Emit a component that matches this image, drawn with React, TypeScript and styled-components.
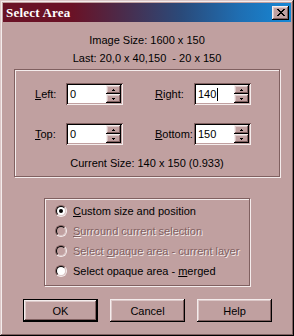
import React from 'react';
import styled, { createGlobalStyle, css } from 'styled-components';

const FACE = '#c0a0a0';
const LIGHT = '#dcc8c8';
const HILITE = '#f4ecec';
const SHADOW = '#806060';
const DARK = '#000000';

const GlobalStyle = createGlobalStyle`
  html, body {
    margin: 0;
    padding: 0;
    background: ${FACE};
  }
`;

const raised = css`
  background: ${FACE};
  box-shadow:
    inset -1px -1px 0 ${DARK},
    inset 1px 1px 0 ${HILITE},
    inset -2px -2px 0 ${SHADOW},
    inset 2px 2px 0 ${LIGHT};
`;

export default function App() {
  return (
    <>
      <GlobalStyle />
      <Window>
        <TitleBar>
          <Title>Select Area</Title>
          <CloseButton>
            <svg width="8" height="7" viewBox="0 0 8 7" shapeRendering="crispEdges">
              <path
                d="M0 0h2v1h1v1h2V1h1V0h2v1H7v1H6v1H5v1h1v1h1v1h1v1H6V6H5V5H3v1H2v1H0V6h1V5h1V4h1V3H2V2H1V1H0z"
                fill="#000"
              />
            </svg>
          </CloseButton>
        </TitleBar>

        <Body>
          <InfoLine>Image Size: 1600 x 150</InfoLine>
          <InfoLine>Last: 20,0 x 40,150  - 20 x 150</InfoLine>

          <SizeGroup>
            <FieldGrid>
              <FieldLabel><U>L</U>eft:</FieldLabel>
              <Spinner value="0" />
              <FieldLabel><U>R</U>ight:</FieldLabel>
              <Spinner value="140" caret />
              <FieldLabel><U>T</U>op:</FieldLabel>
              <Spinner value="0" />
              <FieldLabel><U>B</U>ottom:</FieldLabel>
              <Spinner value="150" />
            </FieldGrid>
            <CurrentSize>Current Size: 140 x 150 (0.933)</CurrentSize>
          </SizeGroup>

          <ModeGroup>
            <RadioRow>
              <Radio checked />
              <RadioText><U>C</U>ustom size and position</RadioText>
            </RadioRow>
            <RadioRow>
              <Radio disabled />
              <RadioText $disabled><U>S</U>urround current selection</RadioText>
            </RadioRow>
            <RadioRow>
              <Radio disabled />
              <RadioText $disabled>Select <U>o</U>paque area - current layer</RadioText>
            </RadioRow>
            <RadioRow>
              <Radio />
              <RadioText>Select opaque area - <U>m</U>erged</RadioText>
            </RadioRow>
          </ModeGroup>

          <ButtonRow>
            <DialogButton $default>OK</DialogButton>
            <DialogButton>Cancel</DialogButton>
            <DialogButton>Help</DialogButton>
          </ButtonRow>
        </Body>
      </Window>
    </>
  );
}

function Spinner({ value, caret }: { value: string; caret?: boolean }) {
  return (
    <SpinBox>
      <SpinText>
        {value}
        {caret && <Caret />}
      </SpinText>
      <SpinButtons>
        <SpinButton>
          <svg width="3" height="2" viewBox="0 0 3 2" shapeRendering="crispEdges">
            <path d="M1 0h1v1h1v1H0V1h1z" fill="#000" />
          </svg>
        </SpinButton>
        <SpinButton>
          <svg width="3" height="2" viewBox="0 0 3 2" shapeRendering="crispEdges">
            <path d="M0 0h3v1H2v1H1V1H0z" fill="#000" />
          </svg>
        </SpinButton>
      </SpinButtons>
    </SpinBox>
  );
}

function Radio({ checked, disabled }: { checked?: boolean; disabled?: boolean }) {
  return (
    <RadioOuter>
      <RadioInner $disabled={disabled}>{checked && <RadioDot />}</RadioInner>
    </RadioOuter>
  );
}

/* --- Styled Components --- */

const Window = styled.div`
  width: 294px;
  height: 336px;
  box-sizing: border-box;
  padding: 3px;
  display: flex;
  flex-direction: column;
  background: ${FACE};
  box-shadow:
    inset -1px -1px 0 ${DARK},
    inset 1px 1px 0 ${LIGHT},
    inset -2px -2px 0 ${SHADOW},
    inset 2px 2px 0 ${HILITE};
  font-family: 'Liberation Sans', Arial, sans-serif;
  font-size: 11px;
  color: #000;
`;

const TitleBar = styled.div`
  height: 19px;
  display: flex;
  align-items: center;
  padding: 0 2px 0 3px;
  background: linear-gradient(
    to right,
    #6a1226 0%,
    #6a1226 24%,
    #4a2c4c 42%,
    #2a4a7a 62%,
    #1f6eb2 82%,
    #1688d6 100%
  );
`;

const Title = styled.span`
  flex: 1;
  color: #fff;
  font-family: 'Liberation Serif', 'Times New Roman', serif;
  font-weight: bold;
  font-size: 13px;
  letter-spacing: 0.2px;
`;

const CloseButton = styled.div`
  width: 17px;
  height: 14px;
  display: flex;
  align-items: center;
  justify-content: center;
  ${raised}
`;

const Body = styled.div`
  flex: 1;
  display: flex;
  flex-direction: column;
  align-items: flex-start;
  padding-top: 9px;
`;

const InfoLine = styled.div`
  width: 100%;
  height: 18px;
  line-height: 18px;
  text-align: center;
  white-space: pre;
`;

const GroupBox = styled.div`
  box-sizing: border-box;
  border: 1px solid ${SHADOW};
  box-shadow:
    inset 1px 1px 0 ${HILITE},
    1px 1px 0 ${HILITE};
`;

const SizeGroup = styled(GroupBox)`
  width: 266px;
  height: 108px;
  margin: 2px 0 0 11px;
  padding: 13px 0 0 20px;
`;

const FieldGrid = styled.div`
  display: grid;
  grid-template-columns: 31px 89px 39px 57px;
  grid-auto-rows: 22px;
  row-gap: 18px;
  align-items: center;
`;

const FieldLabel = styled.span`
  white-space: nowrap;
`;

const U = styled.span`
  text-decoration: underline;
  text-underline-offset: 1px;
`;

const SpinBox = styled.div`
  width: 57px;
  height: 22px;
  box-sizing: border-box;
  padding: 2px;
  display: flex;
  background: #fff;
  box-shadow:
    inset 1px 1px 0 ${SHADOW},
    inset -1px -1px 0 ${HILITE},
    inset 2px 2px 0 ${DARK},
    inset -2px -2px 0 ${FACE};
`;

const SpinText = styled.div`
  flex: 1;
  display: flex;
  align-items: center;
  padding-left: 2px;
  font-size: 11px;
`;

const Caret = styled.span`
  display: inline-block;
  width: 1px;
  height: 13px;
  margin-left: 1px;
  background: #000;
`;

const SpinButtons = styled.div`
  width: 15px;
  display: flex;
  flex-direction: column;
`;

const SpinButton = styled.div`
  flex: 1;
  display: flex;
  align-items: center;
  justify-content: center;
  ${raised}
`;

const CurrentSize = styled.div`
  margin: 9px 0 0 -20px;
  height: 18px;
  line-height: 18px;
  text-align: center;
`;

const ModeGroup = styled(GroupBox)`
  width: 206px;
  height: 88px;
  margin: 21px 0 0 41px;
  padding: 2px 0 0 10px;
  display: flex;
  flex-direction: column;
`;

const RadioRow = styled.div`
  height: 20px;
  display: flex;
  align-items: center;
  gap: 6px;
`;

const RadioOuter = styled.span`
  width: 12px;
  height: 12px;
  box-sizing: border-box;
  border-radius: 50%;
  border: 1px solid;
  border-color: ${SHADOW} ${HILITE} ${HILITE} ${SHADOW};
  display: flex;
`;

const RadioInner = styled.span<{ $disabled?: boolean }>`
  flex: 1;
  border-radius: 50%;
  border: 1px solid;
  border-color: ${DARK} ${LIGHT} ${LIGHT} ${DARK};
  background: ${({ $disabled }) => ($disabled ? FACE : '#fff')};
  display: flex;
  align-items: center;
  justify-content: center;
`;

const RadioDot = styled.span`
  width: 4px;
  height: 4px;
  border-radius: 50%;
  background: #000;
`;

const RadioText = styled.span<{ $disabled?: boolean }>`
  white-space: nowrap;
  color: ${({ $disabled }) => ($disabled ? SHADOW : '#000')};
  text-shadow: ${({ $disabled }) => ($disabled ? `1px 1px 0 ${HILITE}` : 'none')};
`;

const ButtonRow = styled.div`
  display: flex;
  gap: 12px;
  margin: 13px 0 0 20px;
`;

const DialogButton = styled.button<{ $default?: boolean }>`
  width: 75px;
  height: 23px;
  padding: 0;
  border: ${({ $default }) => ($default ? `1px solid ${DARK}` : 'none')};
  font-family: 'Liberation Sans', Arial, sans-serif;
  font-size: 11px;
  color: #000;
  ${raised}
`;
